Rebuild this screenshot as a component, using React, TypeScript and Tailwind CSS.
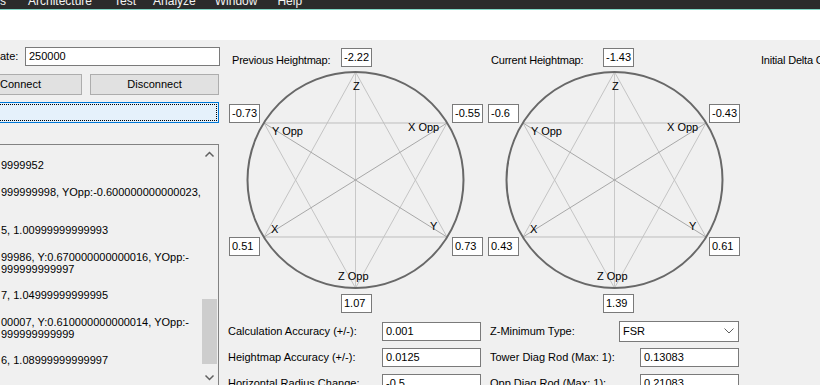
const font = { fontFamily: '"Liberation Sans", Arial, sans-serif' };

type Diagram = {
  title: string;
  top: string;
  ul: string;
  ur: string;
  ll: string;
  lr: string;
  bottom: string;
  topX: number;
  rightX: number;
};

const cx = 127.5;
const cy = 140;
const r = 108;
const dx = 91.5;
const dy = 57;
const P = {
  z: [cx, cy - r],
  zo: [cx, cy + r],
  yo: [cx - dx, cy - dy],
  xo: [cx + dx, cy - dy],
  x: [cx - dx, cy + dy],
  y: [cx + dx, cy + dy],
};

function ValueBox({ v, className }: { v: string; className: string }) {
  return (
    <div
      className={`absolute h-[19px] w-[31px] border border-[#7a7a7a] bg-white pl-[2px] text-[11px] leading-[17px] text-black ${className}`}
    >
      {v}
    </div>
  );
}

function Heightmap({ d }: { d: Diagram }) {
  const line = (a: number[], b: number[], c: string) => (
    <line x1={a[0]} y1={a[1]} x2={b[0]} y2={b[1]} stroke={c} strokeWidth={1} />
  );
  return (
    <div className="relative h-[278px] w-[259px] shrink-0 text-[11px] leading-[13px] text-black">
      <span className="absolute left-[4px] top-[14px] tracking-[-0.2px]">{d.title}</span>
      <svg className="absolute left-0 top-0" width={259} height={278} viewBox="0 0 259 278">
        {line(P.z, P.x, "#c4c4c4")}
        {line(P.z, P.y, "#c4c4c4")}
        {line(P.x, P.y, "#bdbdbd")}
        {line(P.zo, P.yo, "#c4c4c4")}
        {line(P.zo, P.xo, "#c4c4c4")}
        {line(P.yo, P.xo, "#bdbdbd")}
        {line(P.z, P.zo, "#c8c8c8")}
        {line(P.yo, P.y, "#a8a8a8")}
        {line(P.xo, P.x, "#a8a8a8")}
        <circle cx={cx} cy={cy} r={r} fill="none" stroke="#686868" strokeWidth={2} />
      </svg>
      <span className="absolute left-[125px] top-[40px]">Z</span>
      <span className="absolute left-[44px] top-[85px]">Y Opp</span>
      <span className="absolute left-[180px] top-[81px]">X Opp</span>
      <span className="absolute left-[43px] top-[183px]">X</span>
      <span className="absolute left-[202px] top-[180px]">Y</span>
      <span className="absolute left-[110px] top-[230px]">Z Opp</span>
      <ValueBox v={d.top} className={d.topX === 113 ? "left-[113px] top-[8px]" : "left-[116px] top-[8px]"} />
      <ValueBox v={d.ul} className="left-[1px] top-[64px]" />
      <ValueBox v={d.ur} className={d.rightX === 224 ? "left-[224px] top-[64px]" : "left-[222px] top-[64px]"} />
      <ValueBox v={d.ll} className="left-[1px] top-[197px]" />
      <ValueBox v={d.lr} className={d.rightX === 224 ? "left-[224px] top-[197px]" : "left-[222px] top-[197px]"} />
      <ValueBox v={d.bottom} className={d.topX === 113 ? "left-[113px] top-[254px]" : "left-[116px] top-[254px]"} />
    </div>
  );
}

function Field({ v, className }: { v: string; className: string }) {
  return (
    <div
      className={`h-[19px] shrink-0 border border-[#7a7a7a] bg-white pl-[3px] text-[11px] leading-[17px] text-black ${className}`}
    >
      {v}
    </div>
  );
}

const entries = [
  ["9999952"],
  ["999999998, YOpp:-0.600000000000023,", "\u00a0"],
  ["5, 1.00999999999993"],
  ["99986, Y:0.670000000000016, YOpp:-", "999999999997"],
  ["7, 1.04999999999995"],
  ["00007, Y:0.610000000000014, YOpp:-", "999999999999"],
  ["6, 1.08999999999997"],
];

export default function App() {
  return (
    <div className="h-[385px] w-[820px] overflow-hidden bg-[#f0f0f0]" style={font}>
      {/* menu bar, mostly scrolled off */}
      <div className="h-[9px] overflow-hidden bg-[#2b2b2b]">
        <div className="mt-[-5px] flex text-[12px] leading-[12px] text-[#f2f2f2]">
          <span className="ml-[-22px]">Tools</span>
          <span className="ml-[22px]">Architecture</span>
          <span className="ml-[22px]">Test</span>
          <span className="ml-[17px]">Analyze</span>
          <span className="ml-[19px]">Window</span>
          <span className="ml-[20px]">Help</span>
        </div>
      </div>
      <div className="h-px bg-[#7fd6c5]" />
      <div className="h-[30px] bg-white" />

      <div className="flex h-[345px] text-[11px] text-black">
        {/* left column */}
        <div className="flex w-[220px] shrink-0 flex-col overflow-hidden">
          <div className="mt-[7px] flex items-center">
            <span className="w-[25px] leading-[13px]">ate:</span>
            <Field v="250000" className="w-[195px]" />
          </div>
          <div className="mt-[8px] flex">
            <div className="ml-[-41px] flex h-[21px] w-[123px] shrink-0 items-center justify-center border border-[#adadad] bg-[#e1e1e1]">
              Connect
            </div>
            <div className="ml-[8px] flex h-[21px] w-[129px] shrink-0 items-center justify-center border border-[#adadad] bg-[#e1e1e1]">
              Disconnect
            </div>
          </div>
          <div className="mt-[7px] ml-[-20px] h-[21px] w-[239px] shrink-0 border border-[#0078d7] bg-[#e5f1fb] p-[1px]">
            <div className="h-full w-full border border-dotted border-black" />
          </div>
          <div className="mt-[21px] ml-[-10px] flex h-[300px] w-[229px] shrink-0 border border-[#828282] bg-[#f0f0f0]">
            <div className="flex flex-1 flex-col gap-[15px] pl-[10px] pt-[15px] leading-[11.7px]">
              {entries.map((e, i) => (
                <div key={i}>
                  {e.map((l, j) => (
                    <div key={j} className="whitespace-nowrap">
                      {l}
                    </div>
                  ))}
                </div>
              ))}
            </div>
            <div className="flex w-[17px] shrink-0 flex-col items-center bg-[#f0f0f0]">
              <svg width="17" height="17" viewBox="0 0 17 17" className="mt-[1px]">
                <polyline points="4.5,10.5 8.5,6.5 12.5,10.5" fill="none" stroke="#606060" strokeWidth={1.5} />
              </svg>
              <div className="mt-[136px] h-[65px] w-[15px] bg-[#cdcdcd]" />
              <svg width="17" height="17" viewBox="0 0 17 17" className="mt-[5px]">
                <polyline points="4.5,6.5 8.5,10.5 12.5,6.5" fill="none" stroke="#606060" strokeWidth={1.5} />
              </svg>
            </div>
          </div>
        </div>

        {/* right side */}
        <div className="ml-[8px] flex flex-col">
          <div className="flex">
            <Heightmap
              d={{ title: "Previous Heightmap:", top: "-2.22", ul: "-0.73", ur: "-0.55", ll: "0.51", lr: "0.73", bottom: "1.07", topX: 113, rightX: 224 }}
            />
            <Heightmap
              d={{ title: "Current Heightmap:", top: "-1.43", ul: "-0.6", ur: "-0.43", ll: "0.43", lr: "0.61", bottom: "1.39", topX: 116, rightX: 222 }}
            />
            <span className="ml-[15px] mt-[14px] whitespace-nowrap leading-[13px] tracking-[-0.2px]">Initial Delta Calibration:</span>
          </div>

          <div className="flex flex-col leading-[13px]">
            <div className="flex h-[26px] items-center">
              <span className="w-[154px] shrink-0">Calculation Accuracy (+/-):</span>
              <Field v="0.001" className="w-[99px]" />
              <span className="ml-[9px] w-[129px] shrink-0">Z-Minimum Type:</span>
              <div className="flex h-[21px] w-[120px] shrink-0 items-center justify-between border border-[#7a7a7a] bg-white pl-[3px] pr-[4px]">
                <span>FSR</span>
                <svg width="10" height="6" viewBox="0 0 10 6">
                  <polyline points="0.5,0.5 5,5 9.5,0.5" fill="none" stroke="#606060" strokeWidth={1} />
                </svg>
              </div>
            </div>
            <div className="flex h-[26px] items-center">
              <span className="w-[154px] shrink-0">Heightmap Accuracy (+/-):</span>
              <Field v="0.0125" className="w-[99px]" />
              <span className="ml-[9px] w-[150px] shrink-0">Tower Diag Rod (Max: 1):</span>
              <Field v="0.13083" className="w-[99px]" />
            </div>
            <div className="flex h-[26px] items-center">
              <span className="w-[154px] shrink-0">Horizontal Radius Change:</span>
              <Field v="-0.5" className="w-[99px]" />
              <span className="ml-[9px] w-[150px] shrink-0">Opp Diag Rod (Max: 1):</span>
              <Field v="0.21083" className="w-[99px]" />
            </div>
          </div>
        </div>
      </div>
    </div>
  );
}
